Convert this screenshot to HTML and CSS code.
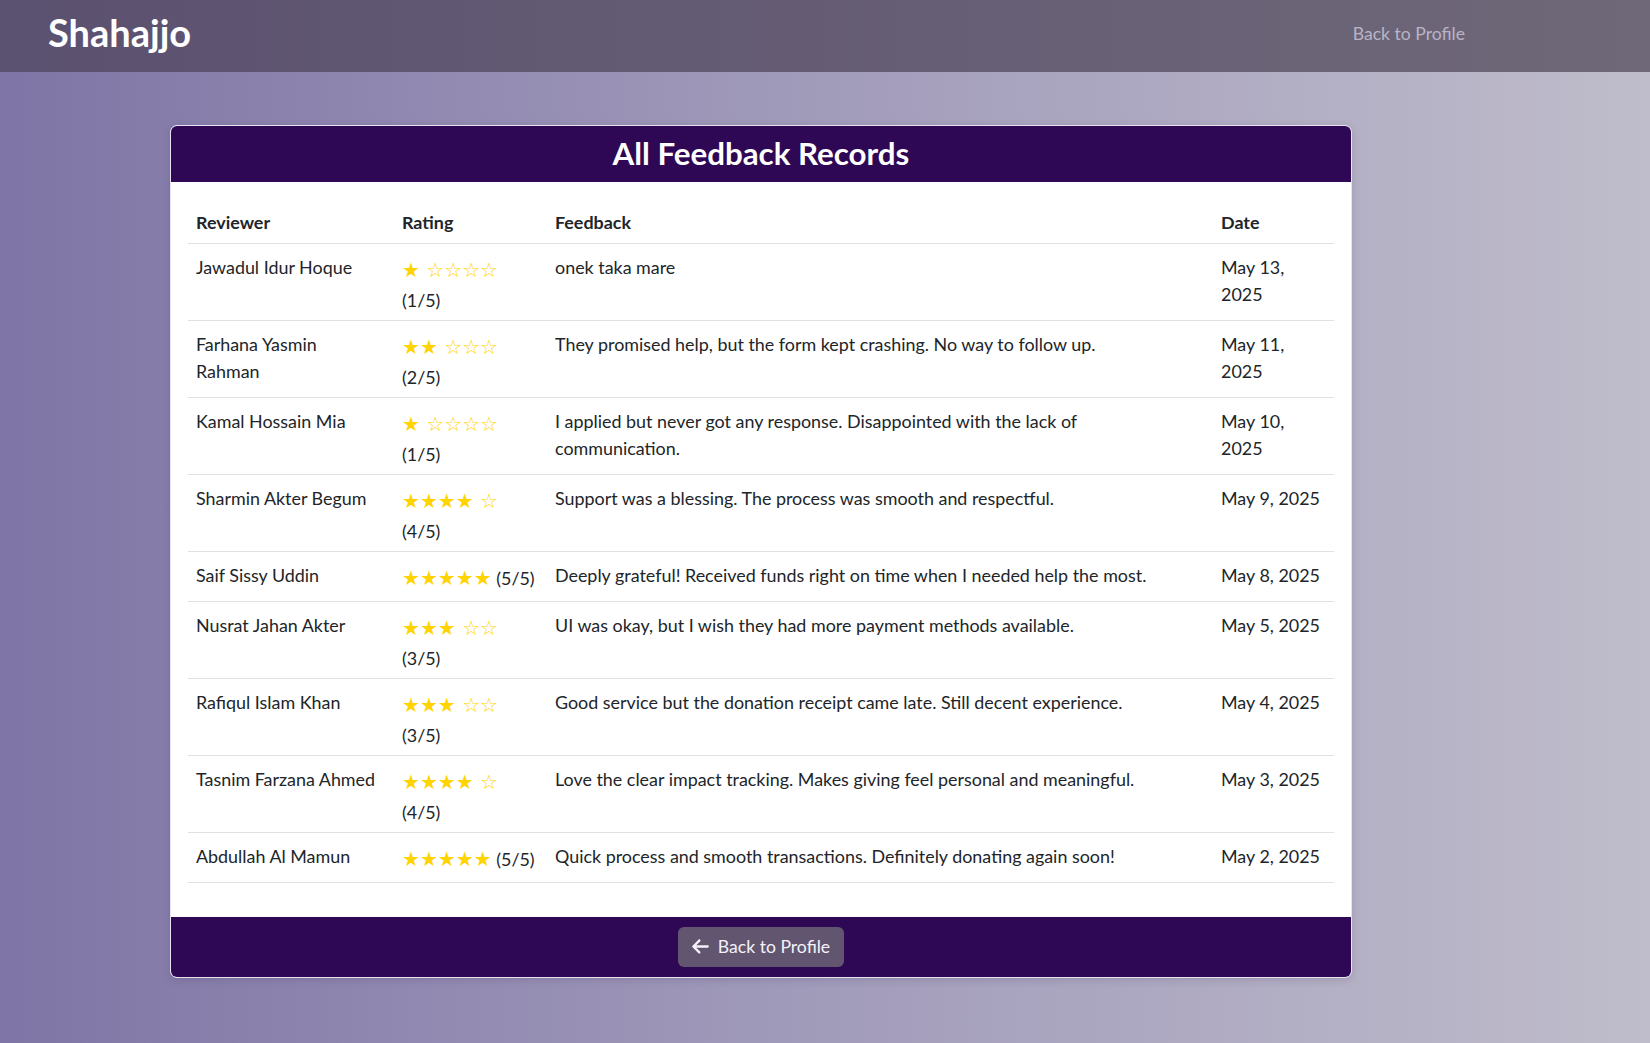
FILE: index.html
```html
<!DOCTYPE html>
<html lang="en">
<head>
<meta charset="utf-8">
<title>All Feedback Records - Shahajjo</title>
<link rel="stylesheet" href="styles.css">
</head>
<body>
<nav class="navbar">
  <a class="brand" href="#">Shahajjo</a>
  <a class="nav-link" href="#">Back to Profile</a>
</nav>
<main class="page">
  <section class="card">
    <header class="card-header"><h2 class="card-title">All Feedback Records</h2></header>
    <div class="card-body">
      <table class="table">
        <colgroup>
          <col class="c-reviewer"><col class="c-rating"><col class="c-feedback"><col class="c-date">
        </colgroup>
        <thead>
          <tr><th>Reviewer</th><th>Rating</th><th>Feedback</th><th>Date</th></tr>
        </thead>
        <tbody>
          <tr><td class="name">Jawadul Idur Hoque</td><td><span class="stars">★ ☆☆☆☆</span> <span class="count below">(1/5)</span></td><td class="text">onek taka mare</td><td>May 13, 2025</td></tr>
          <tr><td class="name">Farhana Yasmin Rahman</td><td><span class="stars">★★ ☆☆☆</span> <span class="count below">(2/5)</span></td><td class="text">They promised help, but the form kept crashing. No way to follow up.</td><td>May 11, 2025</td></tr>
          <tr><td class="name">Kamal Hossain Mia</td><td><span class="stars">★ ☆☆☆☆</span> <span class="count below">(1/5)</span></td><td class="text">I applied but never got any response. Disappointed with the lack of communication.</td><td>May 10, 2025</td></tr>
          <tr><td class="name">Sharmin Akter Begum</td><td><span class="stars">★★★★ ☆</span> <span class="count below">(4/5)</span></td><td class="text">Support was a blessing. The process was smooth and respectful.</td><td>May 9, 2025</td></tr>
          <tr><td class="name">Saif Sissy Uddin</td><td><span class="stars">★★★★★</span> <span class="count">(5/5)</span></td><td class="text">Deeply grateful! Received funds right on time when I needed help the most.</td><td>May 8, 2025</td></tr>
          <tr><td class="name">Nusrat Jahan Akter</td><td><span class="stars">★★★ ☆☆</span> <span class="count below">(3/5)</span></td><td class="text">UI was okay, but I wish they had more payment methods available.</td><td>May 5, 2025</td></tr>
          <tr><td class="name">Rafiqul Islam Khan</td><td><span class="stars">★★★ ☆☆</span> <span class="count below">(3/5)</span></td><td class="text">Good service but the donation receipt came late. Still decent experience.</td><td>May 4, 2025</td></tr>
          <tr><td class="name">Tasnim Farzana Ahmed</td><td><span class="stars">★★★★ ☆</span> <span class="count below">(4/5)</span></td><td class="text">Love the clear impact tracking. Makes giving feel personal and meaningful.</td><td>May 3, 2025</td></tr>
          <tr><td class="name">Abdullah Al Mamun</td><td><span class="stars">★★★★★</span> <span class="count">(5/5)</span></td><td class="text">Quick process and smooth transactions. Definitely donating again soon!</td><td>May 2, 2025</td></tr>
        </tbody>
      </table>
    </div>
    <footer class="card-footer">
      <a class="btn-back" href="#">
        <svg class="arrow" viewBox="0 0 448 512" aria-hidden="true"><path fill="currentColor" d="M9.4 233.4c-12.5 12.5-12.5 32.8 0 45.3l160 160c12.5 12.5 32.8 12.5 45.3 0s12.5-32.8 0-45.3L109.2 288 416 288c17.7 0 32-14.3 32-32s-14.3-32-32-32l-306.7 0L214.6 118.6c12.5-12.5 12.5-32.8 0-45.3s-32.8-12.5-45.3 0l-160 160z"/></svg>
        <span>Back to Profile</span>
      </a>
    </footer>
  </section>
</main>
</body>
</html>
```
FILE: styles.css
```css
* { box-sizing: border-box; }

html, body {
  margin: 0;
}

body {
  min-height: 100vh;
  background: linear-gradient(to right, #7f75a6 0%, #a29cbb 50%, #bfbccb 100%);
  font-family: "Lato", "Open Sans", "Liberation Sans", sans-serif;
  font-size: 17.9px;
  line-height: 26.4px;
  color: #212529;
}

.navbar {
  height: 72px;
  display: flex;
  align-items: center;
  justify-content: space-between;
  padding: 0 185px 6px 48px;
  background: linear-gradient(to right, #5b5170, #6f6878);
}

.brand {
  color: #ffffff;
  font-size: 38px;
  line-height: 1.2;
  font-weight: 700;
  text-decoration: none;
  margin-top: -1px;
}

.nav-link {
  color: #b9b4c6;
  text-decoration: none;
  font-size: 17.6px;
  margin-top: 2px;
}

.page {
  padding: 53px 0 66px 170px;
}

.card {
  width: 1182px;
  background: #ffffff;
  border: 1px solid #e6e3ee;
  border-radius: 7px;
  overflow: hidden;
  box-shadow: 0 2px 8px rgba(40, 20, 70, 0.15);
}

.card-header {
  background: #2e0854;
  height: 56px;
  display: flex;
  align-items: center;
  justify-content: center;
}

.card-title {
  margin: 0;
  color: #ffffff;
  font-size: 31.3px;
  font-weight: 700;
  line-height: 1.2;
}

.card-body {
  padding: 19px 17px 18px;
}

.table {
  width: 100%;
  border-collapse: collapse;
  table-layout: fixed;
  margin-bottom: 16px;
}

.c-reviewer { width: 206px; }
.c-rating { width: 153px; }
.c-feedback { width: 666px; }
.c-date { width: auto; }

.table th,
.table td {
  padding: 8px;
  text-align: left;
  vertical-align: top;
  border-bottom: 1px solid #dee2e6;
}

.table td {
  padding: 10px 8px 6px;
}

.table td.name {
  padding-right: 16px;
}

.table td.text {
  padding-right: 24px;
}

.table th {
  font-weight: 700;
}

.stars {
  color: #ffd400;
  font-family: "DejaVu Sans", sans-serif;
  font-size: 20px;
  line-height: 33px;
}

.count.below {
  display: block;
  line-height: 26.9px;
}

.card-footer {
  background: #2e0854;
  padding: 10px;
  display: flex;
  justify-content: center;
}

.btn-back {
  display: inline-flex;
  align-items: center;
  gap: 9px;
  height: 40px;
  padding: 0 14px;
  background: #625570;
  color: #f4f2f8;
  text-decoration: none;
  border-radius: 6px;
  font-size: 17.6px;
}

.arrow {
  width: 17px;
  height: 19px;
}
```
